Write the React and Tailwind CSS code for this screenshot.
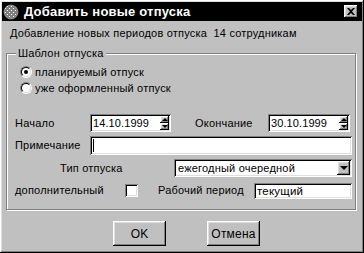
import React from "react";

const raised =
  "shadow-[inset_-1px_-1px_#000,inset_1px_1px_#fff,inset_-2px_-2px_#808080,inset_2px_2px_#dfdfdf]";
const sunken =
  "shadow-[inset_1px_1px_#808080,inset_-1px_-1px_#fff,inset_2px_2px_#000,inset_-2px_-2px_#dfdfdf]";

const Spin = () => (
  <div className="flex flex-col w-[9px] h-full">
    <div className={`flex-1 flex items-center justify-center bg-[#c0c0c0] ${raised}`}>
      <div className="w-0 h-0 border-x-[3px] border-x-transparent border-b-[3px] border-b-black" />
    </div>
    <div className={`flex-1 flex items-center justify-center bg-[#c0c0c0] ${raised}`}>
      <div className="w-0 h-0 border-x-[3px] border-x-transparent border-t-[3px] border-t-black" />
    </div>
  </div>
);

const DateBox = ({ value, width }) => (
  <div className={`flex items-stretch h-[18px] bg-white p-[2px] ${sunken} ${width}`}>
    <span className="flex-1 pl-[1px] leading-[14px] text-[11px] tracking-[0.1px]">{value}</span>
    <Spin />
  </div>
);

const Radio = ({ checked, label }) => (
  <div className="flex items-center h-[16px]">
    <span className="w-[12px] h-[12px] rounded-full border border-[#808080] border-r-white border-b-white flex">
      <span className="flex-1 rounded-full border border-black border-r-[#dfdfdf] border-b-[#dfdfdf] bg-white flex items-center justify-center">
        {checked && <span className="w-[4px] h-[4px] rounded-full bg-black" />}
      </span>
    </span>
    <span className="ml-[3px]">{label}</span>
  </div>
);

const App = () => {
  return (
    <div
      className={`w-[364px] h-[253px] bg-[#c0c0c0] p-[2px] flex flex-col text-[11px] tracking-[0.2px] text-black ${raised}`}
      style={{ fontFamily: '"Liberation Sans", Arial, sans-serif' }}
    >
      {/* title bar */}
      <div className="h-[19px] bg-black flex items-center pl-[1px] pr-[4px]">
        <svg width="16" height="16" viewBox="0 0 16 16">
          <circle cx="8" cy="8" r="7" fill="#808080" />
          {[3, 5, 7, 9, 11, 13].map((x) =>
            [3, 5, 7, 9, 11, 13].map((y) =>
              (x - 8) ** 2 + (y - 8) ** 2 < 36 && (x + y) % 4 === 0 ? (
                <rect key={`${x}-${y}`} x={x - 1} y={y - 1} width="1" height="1" fill="#fff" />
              ) : null
            )
          )}
          <circle cx="8" cy="8" r="7" fill="none" stroke="#c0c0c0" strokeWidth="0.6" />
        </svg>
        <span className="ml-[5px] text-white font-bold text-[13px] tracking-[0.2px]">
          Добавить новые отпуска
        </span>
        <div className={`ml-auto w-[14px] h-[13px] bg-[#c0c0c0] flex items-center justify-center ${raised}`}>
          <svg width="8" height="7" viewBox="0 0 8 7">
            <path d="M0 0h2l2 2 2-2h2L5 3.5 8 7H6L4 5 2 7H0l3-3.5z" fill="#000" />
          </svg>
        </div>
      </div>

      <div className="mt-[5px] pl-[8px] h-[14px] leading-[14px]">
        Добавление новых периодов отпуска&nbsp; 14 сотрудникам
      </div>

      {/* group */}
      <div className="mt-[13px] ml-[4px] w-[350px] relative border border-[#808080] shadow-[inset_1px_1px_#fff,1px_1px_#fff] pt-[10px] pb-[10px] pl-[8px]">
        <span className="absolute -top-[8px] left-[9px] bg-[#c0c0c0] px-[2px] leading-[14px]">
          Шаблон отпуска
        </span>
        <div className="pl-[5px]">
          <Radio checked label="планируемый отпуск" />
          <Radio label="уже оформленный отпуск" />
        </div>

        <div className="mt-[18px] flex items-center h-[18px]">
          <span className="w-[75px]">Начало</span>
          <DateBox value="14.10.1999" width="w-[81px]" />
          <span className="ml-[24px] w-[73px]">Окончание</span>
          <DateBox value="30.10.1999" width="w-[82px]" />
        </div>

        <div className="mt-[4px] flex items-center h-[19px]">
          <span className="w-[75px]">Примечание</span>
          <div className={`w-[262px] h-[19px] bg-white p-[2px] flex items-center ${sunken}`}>
            <span className="ml-[1px] w-[1px] h-[13px] bg-black" />
          </div>
        </div>

        <div className="mt-[4px] flex items-center h-[18px]">
          <span className="w-[159px] pl-[45px]">Тип отпуска</span>
          <div className={`w-[178px] h-[18px] bg-white p-[2px] flex items-stretch ${sunken}`}>
            <span className="flex-1 pl-[2px] leading-[14px]">ежегодный очередной</span>
            <div className={`w-[13px] bg-[#c0c0c0] flex items-center justify-center ${raised}`}>
              <div className="w-0 h-0 border-x-[4px] border-x-transparent border-t-[4px] border-t-black" />
            </div>
          </div>
        </div>

        <div className="mt-[5px] flex items-center h-[17px]">
          <span className="w-[110px]">дополнительный</span>
          <span className={`w-[13px] h-[13px] bg-white ${sunken}`} />
          <span className="ml-[20px] w-[96px]">Рабочий период</span>
          <div className={`w-[98px] h-[16px] bg-white p-[2px] ${sunken}`}>
            <span className="pl-[1px] leading-[12px] text-[11.5px] block">текущий</span>
          </div>
        </div>
      </div>

      {/* buttons */}
      <div className="mt-[11px] flex pl-[111px] gap-[41px]">
        <button className={`w-[53px] h-[25px] bg-[#c0c0c0] text-[12px] ${raised}`}>OK</button>
        <button className={`w-[53px] h-[25px] bg-[#c0c0c0] text-[12px] ${raised}`}>Отмена</button>
      </div>
    </div>
  );
};

export default App;
